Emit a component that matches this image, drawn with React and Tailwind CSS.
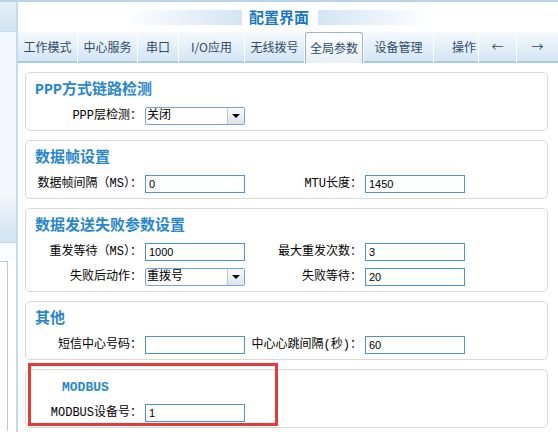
import React from "react";

const cjk = "font-['Liberation_Mono','Noto_Sans_CJK_SC',monospace]";

const tabs = [
  { label: "工作模式", w: "w-[59px]" },
  { label: "中心服务", w: "w-[59px]" },
  { label: "串口", w: "w-[40px]" },
  { label: "I/O应用", w: "w-[65px]" },
  { label: "无线拨号", w: "w-[59px]" },
  { label: "全局参数", w: "w-[58px]", active: true },
  { label: "设备管理", w: "w-[69px]" },
  { label: "操作", w: "w-[44px]", end: true },
  { label: "←", w: "w-[37px]" },
  { label: "→", w: "w-[41px]" },
];

function Panel({ title, children, titlePad = "pl-[9px]", titleFont = "text-[15px]", extra }) {
  return (
    <div className="relative w-[523px] rounded-[5px] border border-[#d9d9d9] bg-white pt-2 pb-[5px]">
      <div className={`h-5 leading-5 font-bold text-[#2a87cb] ${titlePad} ${titleFont} ${cjk}`}>
        {title}
      </div>
      <div className="mt-1.5 flex flex-col gap-[7px]">{children}</div>
      {extra}
    </div>
  );
}

function Label({ text, w = "w-[119px]" }) {
  return (
    <div className={`${w} shrink-0 whitespace-nowrap pr-[3px] text-right text-[12px] leading-[18px] text-black ${cjk}`}>
      {text}
    </div>
  );
}

function Input({ value }) {
  return (
    <div className="flex h-[18px] w-[100px] shrink-0 items-center border border-[#4d95ca] bg-white pl-[3px] font-['Liberation_Sans',sans-serif] text-[11px] text-black">
      {value}
    </div>
  );
}

function Select({ value }) {
  return (
    <div className="flex h-[18px] w-[100px] shrink-0 items-center rounded-[2px] border border-[#7ba3d6] bg-white">
      <span className={`flex-1 pl-px text-[12px] leading-4 text-black ${cjk}`}>{value}</span>
      <span className="flex h-full w-[17px] items-center justify-center border-l border-[#b9c7d8] bg-gradient-to-b from-[#f8fafc] to-[#dbe3ec]">
        <span className="h-0 w-0 border-x-[4px] border-t-[4px] border-x-transparent border-t-black" />
      </span>
    </div>
  );
}

function Row({ children }) {
  return <div className="flex h-[18px] items-center">{children}</div>;
}

export default function App() {
  return (
    <div className="h-[432px] w-[558px] overflow-hidden bg-white">
      <div className="h-[2px] bg-[#b9d5ee]" />
      <div className="flex h-[430px]">
        {/* left strip */}
        <div className="flex w-[18px] shrink-0 flex-col border-r-2 border-[#c5daed]">
          <div className="h-[30px] border-b border-[#c9dcee] bg-gradient-to-b from-[#e6f0f9] to-[#d0e2f2]" />
          <div className="h-[167px] bg-[#f1f8fd]" />
          <div className="h-[44px] border-b border-[#bcd3e8] bg-gradient-to-b from-[#eef5fb] to-[#d2e3f2]" />
          <div className="h-[18px] bg-[#fafdff]" />
          <div className="h-[170px] w-[8px] border-t border-r border-[#c8c8c8] bg-white" />
        </div>

        {/* main */}
        <div className="flex-1">
          {/* header */}
          <div className="flex h-[30px] items-center pl-[106px]">
            <div className="h-[15px] w-[118px] bg-gradient-to-r from-white to-[#d3e5f4]" />
            <div className="ml-[7px] font-['Noto_Sans_CJK_SC',sans-serif] text-[15px] leading-5 font-bold text-[#1b79c4]">
              配置界面
            </div>
            <div className="ml-[9px] h-[15px] w-[113px] bg-gradient-to-r from-[#d3e5f4] to-white" />
          </div>

          {/* tabs */}
          <div className="flex h-[31px] gap-px">
            {tabs.map((t) => (
              <div
                key={t.label}
                className={`${t.w} flex shrink-0 items-center font-['Noto_Sans_CJK_SC',sans-serif] text-[12px] text-[#2f4b67] ${
                  t.end ? "justify-end pr-[2px]" : "justify-center"
                } ${
                  t.active
                    ? "rounded-t-[3px] border border-b-0 border-[#a0b4c6] bg-gradient-to-b from-white to-[#e7f0f8]"
                    : "border-b-2 border-[#a9c9e5] bg-gradient-to-b from-[#f5f9fd] to-[#d3e5f4]"
                }`}
              >
                {t.label}
              </div>
            ))}
          </div>

          {/* content */}
          <div className="flex flex-col gap-[9px] pt-[9px] pl-[7px]">
            <Panel title="PPP方式链路检测">
              <Row>
                <Label text="PPP层检测：" />
                <Select value="关闭" />
              </Row>
            </Panel>

            <Panel title="数据帧设置">
              <Row>
                <Label text="数据帧间隔（MS）：" />
                <Input value="0" />
                <Label text="MTU长度：" w="w-[120px]" />
                <Input value="1450" />
              </Row>
            </Panel>

            <Panel title="数据发送失败参数设置">
              <Row>
                <Label text="重发等待（MS）：" />
                <Input value="1000" />
                <Label text="最大重发次数：" w="w-[120px]" />
                <Input value="3" />
              </Row>
              <Row>
                <Label text="失败后动作：" />
                <Select value="重拨号" />
                <Label text="失败等待：" w="w-[120px]" />
                <Input value="20" />
              </Row>
            </Panel>

            <Panel title="其他">
              <Row>
                <Label text="短信中心号码：" />
                <Input value="" />
                <Label text="中心心跳间隔(秒)：" w="w-[120px]" />
                <Input value="60" />
              </Row>
            </Panel>

            <Panel
              title="MODBUS"
              titlePad="pl-[36px]"
              titleFont="text-[13px]"
              extra={
                <div className="absolute top-[-7px] left-[2px] h-[63px] w-[250px] border-[3px] border-[#e83838]" />
              }
            >
              <Row>
                <Label text="MODBUS设备号：" />
                <Input value="1" />
              </Row>
            </Panel>
          </div>
        </div>
      </div>
    </div>
  );
}
